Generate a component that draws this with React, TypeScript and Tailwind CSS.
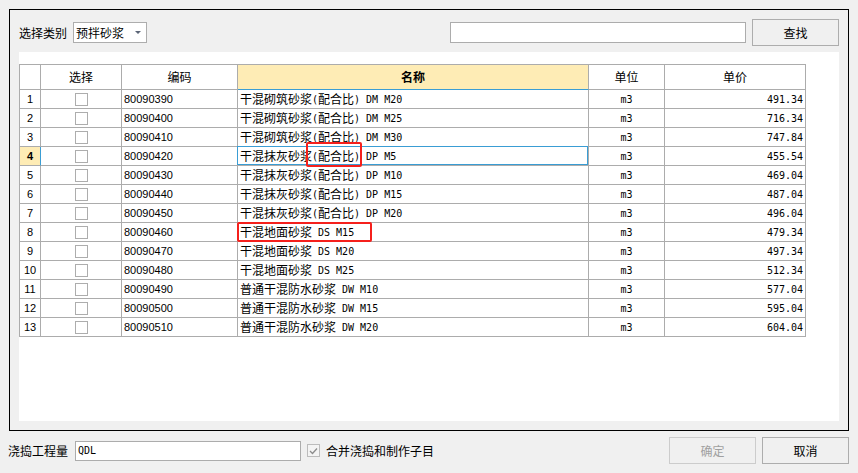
import React from "react";

const cjk = '"Noto Sans CJK SC", sans-serif';

const rows = [
  { no: 1, code: "80090390", name: "干混砌筑砂浆(配合比) DM M20", price: "491.34" },
  { no: 2, code: "80090400", name: "干混砌筑砂浆(配合比) DM M25", price: "716.34" },
  { no: 3, code: "80090410", name: "干混砌筑砂浆(配合比) DM M30", price: "747.84" },
  { no: 4, code: "80090420", name: "干混抹灰砂浆(配合比) DP M5", price: "455.54" },
  { no: 5, code: "80090430", name: "干混抹灰砂浆(配合比) DP M10", price: "469.04" },
  { no: 6, code: "80090440", name: "干混抹灰砂浆(配合比) DP M15", price: "487.04" },
  { no: 7, code: "80090450", name: "干混抹灰砂浆(配合比) DP M20", price: "496.04" },
  { no: 8, code: "80090460", name: "干混地面砂浆 DS M15", price: "479.34" },
  { no: 9, code: "80090470", name: "干混地面砂浆 DS M20", price: "497.34" },
  { no: 10, code: "80090480", name: "干混地面砂浆 DS M25", price: "512.34" },
  { no: 11, code: "80090490", name: "普通干混防水砂浆 DW M10", price: "577.04" },
  { no: 12, code: "80090500", name: "普通干混防水砂浆 DW M15", price: "595.04" },
  { no: 13, code: "80090510", name: "普通干混防水砂浆 DW M20", price: "604.04" },
];

// split a name into CJK runs and half-width runs (half-width is drawn in a 6px mono)
const MixedText = ({ text }: { text: string }) => {
  const parts = text.match(/[\x00-\x7f]+|[^\x00-\x7f]+/g) || [];
  return (
    <>
      {parts.map((p, i) =>
        /^[\x00-\x7f]/.test(p) ? (
          <span key={i} className="whitespace-pre font-['DejaVu_Sans_Mono',monospace] text-[10px]">
            {p}
          </span>
        ) : (
          <span key={i} className="font-['Noto_Sans_CJK_SC',sans-serif] text-[12px]">
            {p}
          </span>
        ),
      )}
    </>
  );
};

const Box = ({ checked = false, dim = false }: { checked?: boolean; dim?: boolean }) => (
  <div
    className={`flex h-[13px] w-[13px] items-center justify-center border ${dim ? "border-[#bcbcbc] bg-[#f4f4f4]" : "border-[#adadad] bg-white"}`}
  >
    {checked && (
      <svg width="9" height="8" viewBox="0 0 9 8">
        <path d="M1 4 L3.5 6.5 L8 1.5" fill="none" stroke="#8d8d8d" strokeWidth="1.3" />
      </svg>
    )}
  </div>
);

const cell = "flex shrink-0 items-center border-r border-b border-[#acacac]";

export default function App() {
  return (
    <div className="flex h-[473px] w-[858px] flex-col bg-[#f0f0f0] text-black" style={{ fontFamily: cjk }}>
      <div className="ml-[9px] mt-[9px] flex h-[422px] w-[840px] flex-col border border-black px-[9px] pt-[9px]">
        {/* top bar */}
        <div className="flex h-[27px] items-center">
          <span className="pl-[-1px] text-[12px]">选择类别</span>
          <div className="ml-[6px] flex h-[21px] w-[74px] items-center border border-[#adadad] bg-white pl-[2px] pr-[5px]">
            <span className="text-[12px]">预拌砂浆</span>
            <svg className="ml-auto" width="6" height="4" viewBox="0 0 6 4">
              <path d="M0 0 H6 L3 3 Z" fill="#5b6577" />
            </svg>
          </div>
          <div className="ml-auto h-[21px] w-[296px] border border-[#acacac] bg-white" />
          <button className="ml-[6px] h-[27px] w-[87px] border border-[#adadad] bg-[#f0f0f0] text-[12px]">
            查找
          </button>
        </div>

        {/* grid area */}
        <div className="mt-[6px] h-[369px] w-[820px] bg-white pt-[12px]">
          <div className="flex w-[787px] flex-col border-l border-t border-[#acacac]">
            <div className="flex h-[25px] text-[12px]">
              <div className={`${cell} w-[21px]`} />
              <div className={`${cell} w-[81px] justify-center`}>选择</div>
              <div className={`${cell} w-[116px] justify-center`}>编码</div>
              <div className={`${cell} w-[351px] justify-center border-b-[#3a9dd4] bg-[#feecb5] font-bold`}>名称</div>
              <div className={`${cell} w-[76px] justify-center`}>单位</div>
              <div className={`${cell} w-[141px] justify-center`}>单价</div>
            </div>
            {rows.map((r) => {
              const sel = r.no === 4;
              return (
                <div key={r.no} className="flex h-[19px]">
                  <div
                    className={`${cell} w-[21px] justify-center font-['Liberation_Sans',sans-serif] text-[11px] ${sel ? "border-r-[#3a9dd4] bg-[#feecb5] font-bold" : ""}`}
                  >
                    {r.no}
                  </div>
                  <div className={`${cell} w-[81px] justify-center`}>
                    <Box />
                  </div>
                  <div className={`${cell} w-[116px] pl-[2px] font-['Liberation_Sans',sans-serif] text-[11px]`}>
                    {r.code}
                  </div>
                  <div className={`${cell} relative w-[351px] pl-[2px]`}>
                    <MixedText text={r.name} />
                    {sel && (
                      <>
                        <div className="absolute -left-px -top-px bottom-0 right-0 border border-[#3a9dd4]" />
                        <div className="absolute left-[68px] top-[-5px] h-[25px] w-[56px] rounded-[2px] border-2 border-[#f5201c]" />
                      </>
                    )}
                    {r.no === 8 && (
                      <div className="absolute -left-px -top-px h-[20px] w-[135px] rounded-[2px] border-2 border-[#f5201c]" />
                    )}
                  </div>
                  <div className={`${cell} w-[76px] justify-center font-['DejaVu_Sans_Mono',monospace] text-[10px]`}>
                    m3
                  </div>
                  <div className={`${cell} w-[141px] justify-end pr-[2px] font-['DejaVu_Sans_Mono',monospace] text-[10px]`}>
                    {r.price}
                  </div>
                </div>
              );
            })}
          </div>
        </div>
      </div>

      {/* bottom bar */}
      <div className="mt-[6px] flex h-[27px] items-center pl-[8px] pr-[9px]">
        <span className="text-[12px]">浇捣工程量</span>
        <div className="ml-[7px] flex h-[20px] w-[226px] items-center border border-[#acacac] bg-white pl-[2px] font-['DejaVu_Sans_Mono',monospace] text-[10px]">
          QDL
        </div>
        <div className="ml-[6px]">
          <Box checked dim />
        </div>
        <span className="ml-[6px] text-[12px]">合并浇捣和制作子目</span>
        <button className="ml-auto h-[27px] w-[87px] border border-[#cccccc] bg-[#f0f0f0] text-[12px] text-[#a0a0a0]">
          确定
        </button>
        <button className="ml-[6px] h-[27px] w-[87px] border border-[#adadad] bg-[#f0f0f0] text-[12px]">
          取消
        </button>
      </div>
    </div>
  );
}
